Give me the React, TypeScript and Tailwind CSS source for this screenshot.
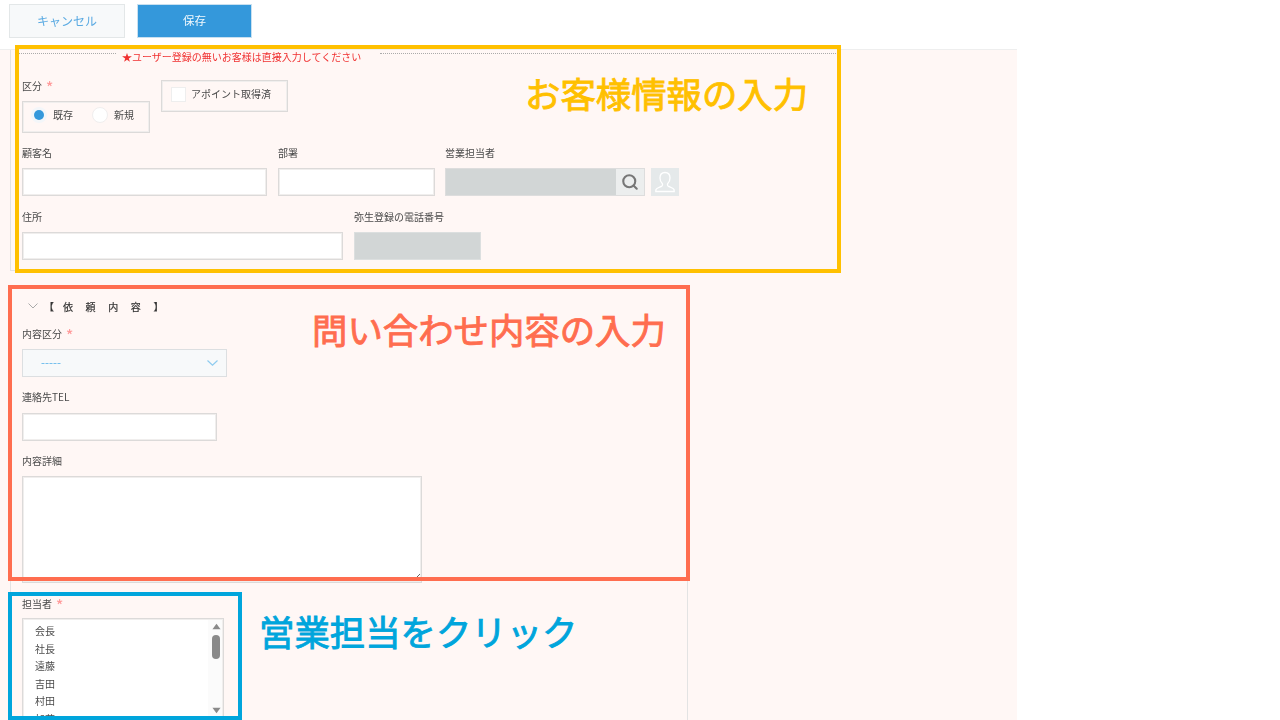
import React from "react";
import { Search } from "lucide-react";

const font = { fontFamily: '"Noto Sans CJK JP", "Noto Sans", sans-serif' };

function Label({ text, required, className = "" }: { text: string; required?: boolean; className?: string }) {
  return (
    <div className={`relative flex h-4 items-center whitespace-nowrap text-[10px] leading-4 text-[#4a4a4a] ${className}`}>
      <span>{text}</span>
      {required && <span className="ml-[4px] mt-[1px] text-[15px] font-medium leading-none text-[#f99]">*</span>}
    </div>
  );
}

const frame = "border border-[#dcdad9] shadow-[inset_0_0_0_1px_#f0eeed]";

function TextBox({ className = "" }: { className?: string }) {
  return <input readOnly className={`block h-7 bg-white outline-none ${frame} ${className}`} />;
}

function UserIcon() {
  return (
    <svg width="24" height="24" viewBox="0 0 24 24" fill="none" stroke="#ffffff" strokeWidth="1.3">
      <path d="M12 2.5c-3.2 0-5 2.5-5 5.6 0 2.2.9 4.2 2.2 5.4.5.5.5 2-.4 2.6-1.6 1-5.3 1.6-5.8 3.4-.2.7-.2 1.4-.2 2h18.4c0-.6 0-1.3-.2-2-.5-1.8-4.2-2.4-5.8-3.4-.9-.6-.9-2.1-.4-2.6 1.3-1.2 2.2-3.2 2.2-5.4 0-3.1-1.8-5.6-5-5.6z" />
    </svg>
  );
}

const staff = ["会長", "社長", "遠藤", "吉田", "村田", "加藤"];

export default function App() {
  return (
    <div style={font} className="relative h-[720px] w-[1280px] overflow-hidden bg-white">
      <div className="w-[1017px] blur-[0.35px]">
        <header className="flex h-[50px] items-start gap-3 border-b border-[#eeeeee] pl-[9px] pt-[4px]">
          <button className="h-[34px] w-[116px] border border-[#e3e7e8] bg-[#f7f9fa] text-[12px] text-[#5aaae2]">キャンセル</button>
          <button className="h-[34px] w-[115px] border border-[#c8e0f0] bg-[#3498db] text-[11.5px] text-[#f2f9fd]">保存</button>
        </header>

        <main className="h-[670px] overflow-hidden bg-[#fff7f5] pl-[10px]">
          {/* customer panel */}
          <section className="h-[221px] w-[828px] border-b border-l border-[#e3e3e3] pl-[11px]">
            <div className="-ml-[3px] flex h-[28px] items-start">
              <div className="mt-[3px] w-[97px] border-t border-dotted border-[#aaaaaa]" />
              <div className="ml-[6px] w-[239px] whitespace-nowrap text-[10px] leading-[14px] text-[#f03030]">★ユーザー登録の無いお客様は直接入力してください</div>
              <div className="ml-[19px] mt-[3px] w-[456px] border-t border-dotted border-[#aaaaaa]" />
            </div>

            <div className="flex items-start gap-[11px]">
              <div>
                <Label text="区分" required className="mb-[7px]" />
                <div className={`flex h-8 w-32 items-center pb-[5px] pl-[8px] text-[10px] text-[#4a4a4a] ${frame}`}>
                  <span className="flex h-4 w-4 items-center justify-center rounded-full bg-[#f3f6f9]">
                    <span className="h-[10px] w-[10px] rounded-full bg-[#3498db]" />
                  </span>
                  <span className="ml-[6px] w-[20px]">既存</span>
                  <span className="ml-[19px] h-4 w-4 rounded-full border border-[#f0eeee] bg-white" />
                  <span className="ml-[6px]">新規</span>
                </div>
              </div>
              <div className={`mt-[2px] flex h-8 w-[127px] items-center pb-[4px] pl-[9px] text-[10px] text-[#4a4a4a] ${frame}`}>
                <span className="h-[15px] w-[15px] border border-[#eeeeee] bg-white" />
                <span className="-mt-[2px] ml-[5px] whitespace-nowrap">アポイント取得済</span>
              </div>
            </div>

            <div className="mt-[12px] flex items-start">
              <div>
                <Label text="顧客名" className="mb-[7px]" />
                <TextBox className="w-[245px]" />
              </div>
              <div className="ml-[11px]">
                <Label text="部署" className="mb-[7px]" />
                <TextBox className="w-[157px]" />
              </div>
              <div className="ml-[10px]">
                <Label text="営業担当者" className="mb-[7px]" />
                <div className="flex items-start">
                  <div className="flex h-7 w-[200px] border border-[#dddddd] bg-[#d2d6d6]">
                    <div className="ml-auto flex h-full w-[28px] items-center justify-center bg-[#eceeee]">
                      <Search size={18} strokeWidth={2.8} color="#777777" />
                    </div>
                  </div>
                  <div className="ml-[6px] flex h-7 w-7 items-center justify-center bg-[#e5e9ea]">
                    <UserIcon />
                  </div>
                </div>
              </div>
            </div>

            <div className="mt-[13px] flex items-start gap-[11px]">
              <div>
                <Label text="住所" className="mb-[7px]" />
                <TextBox className="w-[321px]" />
              </div>
              <div>
                <Label text="弥生登録の電話番号" className="mb-[7px]" />
                <div className="h-7 w-[127px] border border-[#dcdfdf] bg-[#d2d6d6]" />
              </div>
            </div>
          </section>

          {/* request panel */}
          <section className="mt-[15px] h-[500px] w-[678px] border-x border-t border-[#e3e3e3] pl-[11px] pt-[11px]">
            <div className="flex h-4 items-center text-[10px] text-[#333] [-webkit-text-stroke:0.2px]">
              <svg width="10" height="6" viewBox="0 0 10 6" fill="none" stroke="#aaaaaa" strokeWidth="1" className="ml-[6px]">
                <path d="M0.5 0.5 5 5 9.5 0.5" />
              </svg>
              <span className="ml-[6px] whitespace-pre">【</span>
              <span className="ml-[9px] whitespace-pre tracking-[1.3px]">依　頼　内　容　】</span>
            </div>

            <Label text="内容区分" required className="mb-[7px] mt-[12px]" />
            <div className="flex h-7 w-[205px] items-center border border-[#dcdfe1] bg-[#f7f9fa] pb-px pl-[18px] pr-[8px] text-[11.5px] text-[#5ab4ea]">
              <span>-----</span>
              <svg width="11" height="6" viewBox="0 0 11 6" fill="none" stroke="#8ecbef" strokeWidth="1.2" className="ml-auto mt-[1px]">
                <path d="M0.5 0.5 5.5 5.2 10.5 0.5" />
              </svg>
            </div>

            <Label text="連絡先TEL" className="mb-[8px] mt-[12px]" />
            <TextBox className="w-[195px]" />

            <Label text="内容詳細" className="mb-[7px] mt-[12px]" />
            <textarea readOnly className={`block h-[107px] w-[400px] bg-white outline-none ${frame}`} />

            <Label text="担当者" required className="mb-[6px] mt-[13px]" />
            <div className={`relative flex h-[110px] w-[202px] overflow-hidden bg-white p-px ${frame}`}>
              <ul className="flex-1 pl-[11px] pt-[2px] text-[10px] leading-[17.5px] text-[#4a4a4a]">
                {staff.map((n) => (
                  <li key={n}>{n}</li>
                ))}
              </ul>
              <div className="flex w-[14px] flex-col items-center bg-[#fbfbfb] pl-[2px] pt-[3px]">
                <svg width="9" height="7" viewBox="0 0 10 7" fill="#8a8a8a">
                  <path d="M5 0.5 9.5 6.5H0.5z" />
                </svg>
                <div className="mt-[5px] h-6 w-2 rounded-full bg-[#8a8a8a]" />
                <svg width="9" height="7" viewBox="0 0 10 7" className="mt-[48px]" fill="#8a8a8a">
                  <path d="M5 6.5 9.5 0.5H0.5z" />
                </svg>
              </div>
            </div>
          </section>
        </main>
      </div>

      {/* annotation overlays */}
      <div className="absolute left-[15px] top-[45px] h-[228px] w-[826px] border-4 border-[#ffc000]" />
      <div className="absolute left-[8px] top-[285px] h-[296px] w-[682px] border-4 border-[#ff6d4f]" />
      <div className="absolute left-[8px] top-[592px] h-[128px] w-[234px] border-4 border-[#00a5dc]" />
      <div className="absolute left-[525px] top-[67px] whitespace-nowrap text-[35.4px] leading-[52px] text-[#ffc000] [-webkit-text-stroke:0.9px]">お客様情報の入力</div>
      <div className="absolute left-[312px] top-[303px] whitespace-nowrap text-[35.4px] leading-[52px] text-[#ff6d4f] [-webkit-text-stroke:0.9px]">問い合わせ内容の入力</div>
      <div className="absolute left-[259px] top-[605px] whitespace-nowrap text-[35.4px] leading-[52px] text-[#00a5dc] [-webkit-text-stroke:0.9px]">営業担当をクリック</div>
    </div>
  );
}
